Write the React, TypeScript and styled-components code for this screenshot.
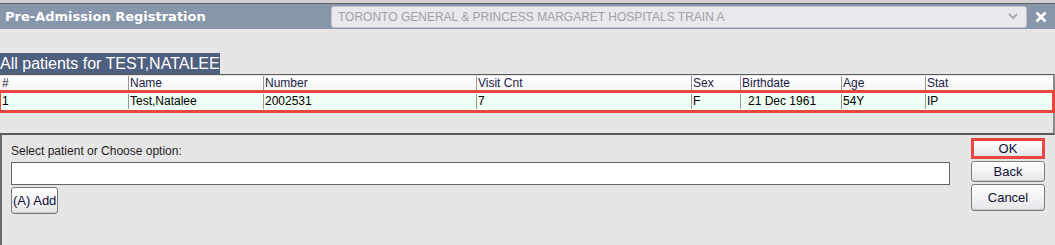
import styled, { createGlobalStyle } from "styled-components";

const GlobalStyle = createGlobalStyle`
	html, body {
		margin: 0;
		padding: 0;
		background: #e6e6e6;
	}
	body {
		font-family: "Liberation Sans", Arial, sans-serif;
	}
`;

const Window = styled.div`
	width: 1055px;
	height: 245px;
	box-sizing: border-box;
	background: #e6e6e6;
	border-top: 3px solid #d2d2d2;
	display: flex;
	flex-direction: column;
	overflow: hidden;
`;

const TitleBar = styled.div`
	height: 26px;
	box-sizing: border-box;
	border-top: 1px solid #606060;
	background: #8796ab;
	display: flex;
	align-items: center;
	padding: 0 0 0 5px;
`;

const Title = styled.div`
	color: #ffffff;
	font-family: "DejaVu Sans", sans-serif;
	font-weight: bold;
	font-size: 13px;
	width: 326px;
	white-space: nowrap;
`;

const Combo = styled.div`
	width: 696px;
	height: 22px;
	box-sizing: border-box;
	background: #e8e8ed;
	border: 1px solid #c4c4cc;
	border-radius: 3px;
	display: flex;
	align-items: center;
	justify-content: space-between;
	padding: 0 8px 0 6px;
	color: #a2a2a6;
	font-size: 12px;
`;

const CloseButton = styled.div`
	flex: 1;
	display: flex;
	justify-content: center;
	align-items: center;
`;

const Body = styled.div`
	flex: 1;
	display: flex;
	flex-direction: column;
	padding-top: 24px;
`;

const Caption = styled.div`
	align-self: flex-start;
	background: #4f5f80;
	color: #ffffff;
	font-size: 16px;
	height: 21px;
	line-height: 21px;
	width: 220px;
	white-space: nowrap;
`;

const Table = styled.div`
	height: 61px;
	box-sizing: border-box;
	border-top: 1px solid #5a5a5a;
	border-bottom: 2px solid #5a5a5a;
	border-right: 2px solid #8a8a8a;
	display: flex;
	flex-direction: column;
`;

const cols = [128, 135, 213, 215, 49, 101, 84, 126];

const Row = styled.div<{ $data?: boolean }>`
	display: grid;
	grid-template-columns: ${cols.map((c) => c + "px").join(" ")};
	height: ${(p) => (p.$data ? "15px" : "14px")};
	line-height: ${(p) => (p.$data ? "15px" : "14px")};
	background: ${(p) =>
		p.$data ? "#effff4" : "linear-gradient(#ffffff, #f4f4f4)"};
	font-size: 12px;
	color: ${(p) => (p.$data ? "#000000" : "#1b1b45")};
	${(p) =>
		p.$data
			? `outline: 3px solid #e8463f; outline-offset: -1px; margin: 2px 0 0 0; padding: 2px 0;`
			: `margin-top: 1px;`}
`;

const Cell = styled.div<{ $first?: boolean; $indent?: number }>`
	border-left: ${(p) => (p.$first ? "none" : "1px solid #9a9a9a")};
	padding-left: ${(p) => (p.$indent ?? 1) + (p.$first ? 1 : 0)}px;
	white-space: nowrap;
	overflow: hidden;
`;

const Footer = styled.div`
	flex: 1;
	display: flex;
	border-left: 2px solid #6a6a6a;
	padding: 3px 10px 0 9px;
	gap: 21px;
`;

const Left = styled.div`
	flex: 1;
	display: flex;
	flex-direction: column;
	align-items: flex-start;
	padding-top: 7px;
`;

const Label = styled.div`
	font-size: 12px;
	color: #1e1e1e;
	height: 13px;
	line-height: 13px;
	margin-bottom: 4px;
`;

const Input = styled.div`
	width: 939px;
	height: 23px;
	box-sizing: border-box;
	background: #ffffff;
	border: 1px solid #666666;
	margin-bottom: 2px;
`;

const Right = styled.div`
	display: flex;
	flex-direction: column;
	gap: 2px;
	width: 74px;
`;

const Button = styled.div<{ $h: number; $focus?: boolean }>`
	height: ${(p) => p.$h}px;
	box-sizing: border-box;
	border: ${(p) => (p.$focus ? "3px solid #e8463f" : "1px solid #7a7a7a")};
	border-radius: ${(p) => (p.$focus ? "0" : "3px")};
	background: linear-gradient(#ffffff, #e6e6ea);
	box-shadow: ${(p) => (p.$focus ? "none" : "inset 0 -1px 0 #c8c8cc")};
	font-size: 13px;
	color: #111133;
	display: flex;
	align-items: center;
	justify-content: center;
	white-space: nowrap;
	padding: 0 1px;
`;

const headers = [
	"#",
	"Name",
	"Number",
	"Visit Cnt",
	"Sex",
	"Birthdate",
	"Age",
	"Stat",
];
const patient = [
	"1",
	"Test,Natalee",
	"2002531",
	"7",
	"F",
	"21 Dec 1961",
	"54Y",
	"IP",
];

export default function App() {
	return (
		<>
			<GlobalStyle />
			<Window>
				<TitleBar>
					<Title>Pre-Admission Registration</Title>
					<Combo>
						<span>TORONTO GENERAL &amp; PRINCESS MARGARET HOSPITALS TRAIN A</span>
						<svg width="10" height="7" viewBox="0 0 10 7">
							<path
								d="M1 1 L5 5 L9 1"
								stroke="#a8a8ae"
								strokeWidth="2"
								fill="none"
							/>
						</svg>
					</Combo>
					<CloseButton>
						<svg width="12" height="12" viewBox="0 0 12 12">
							<path
								d="M1.5 1.5 L10.5 10.5 M10.5 1.5 L1.5 10.5"
								stroke="#ffffff"
								strokeWidth="2.6"
							/>
						</svg>
					</CloseButton>
				</TitleBar>
				<Body>
					<Caption>All patients for TEST,NATALEE</Caption>
					<Table>
						<Row>
							{headers.map((h, i) => (
								<Cell key={h} $first={i === 0}>
									{h}
								</Cell>
							))}
						</Row>
						<Row $data>
							{patient.map((v, i) => (
								<Cell key={i} $first={i === 0} $indent={i === 5 ? 7 : 1}>
									{v}
								</Cell>
							))}
						</Row>
					</Table>
					<Footer>
						<Left>
							<Label>Select patient or Choose option:</Label>
							<Input />
							<Button $h={27}>(A) Add</Button>
						</Left>
						<Right>
							<Button $h={21} $focus>
								OK
							</Button>
							<Button $h={21}>Back</Button>
							<Button $h={27}>Cancel</Button>
						</Right>
					</Footer>
				</Body>
			</Window>
		</>
	);
}
